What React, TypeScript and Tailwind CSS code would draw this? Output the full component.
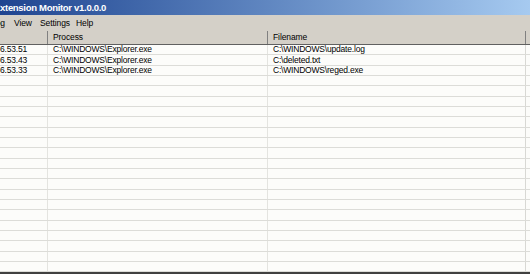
import React from "react";

const rows: [string, string, string][] = [
  ["6.53.51", "C:\\WINDOWS\\Explorer.exe", "C:\\WINDOWS\\update.log"],
  ["6.53.43", "C:\\WINDOWS\\Explorer.exe", "C:\\deleted.txt"],
  ["6.53.33", "C:\\WINDOWS\\Explorer.exe", "C:\\WINDOWS\\reged.exe"],
];

export default function App() {
  const all = Array.from({ length: 22 }, (_, i) => rows[i] ?? ["", "", ""]);
  return (
    <div
      className="w-[530px] h-[274px] overflow-hidden bg-[#d4d0c8] flex flex-col"
      style={{ fontFamily: '"Liberation Sans", Arial, sans-serif' }}
    >
      {/* title bar */}
      <div className="h-[15px] shrink-0 bg-gradient-to-r from-[#1f4490] to-[#a6caf0] flex items-center overflow-hidden">
        <span className="ml-[-6px] text-white font-bold text-[9.5px] leading-none whitespace-nowrap tracking-[-0.3px]">
          Extension Monitor v1.0.0.0
        </span>
      </div>
      {/* menu */}
      <div className="h-[16px] shrink-0 flex items-center text-[8.5px] tracking-[-0.1px] text-black leading-none whitespace-nowrap">
        <span className="ml-[-9px] w-[23px]">Log</span>
        <span className="w-[26px]">View</span>
        <span className="w-[36px]">Settings</span>
        <span>Help</span>
      </div>
      {/* list */}
      <div className="flex-1 flex flex-col bg-[#fcfcfa] overflow-hidden">
        <div className="h-[14px] shrink-0 flex bg-[#d4d0c8] border-b border-[#606060] text-[8.5px] tracking-[-0.1px] leading-none text-black">
          <div className="w-[48px] border-r border-[#808080] shrink-0" />
          <div className="w-[220px] border-r border-[#808080] shrink-0 flex items-center pl-[5px]">
            Process
          </div>
          <div className="w-[258px] border-r border-[#808080] shrink-0 flex items-center pl-[5px]">
            Filename
          </div>
          <div className="flex-1" />
        </div>
        {all.map((r, i) => (
          <div
            key={i}
            className={`${i % 3 === 1 ? "h-[11px]" : "h-[10px]"} shrink-0 flex border-b border-[#dcdcd8] text-[8.5px] tracking-[-0.2px] leading-none text-black whitespace-nowrap`}
          >
            <div className="w-[48px] shrink-0 border-r border-[#e4e4e0] flex items-center">{r[0]}</div>
            <div className="w-[220px] shrink-0 border-r border-[#e4e4e0] flex items-center pl-[5px]">{r[1]}</div>
            <div className="w-[258px] shrink-0 border-r border-[#d8d8d4] flex items-center pl-[5px]">{r[2]}</div>
            <div className="flex-1" />
          </div>
        ))}
        <div className="flex-1" />
      </div>
      <div className="h-[2px] shrink-0 bg-[#404040]" />
    </div>
  );
}
